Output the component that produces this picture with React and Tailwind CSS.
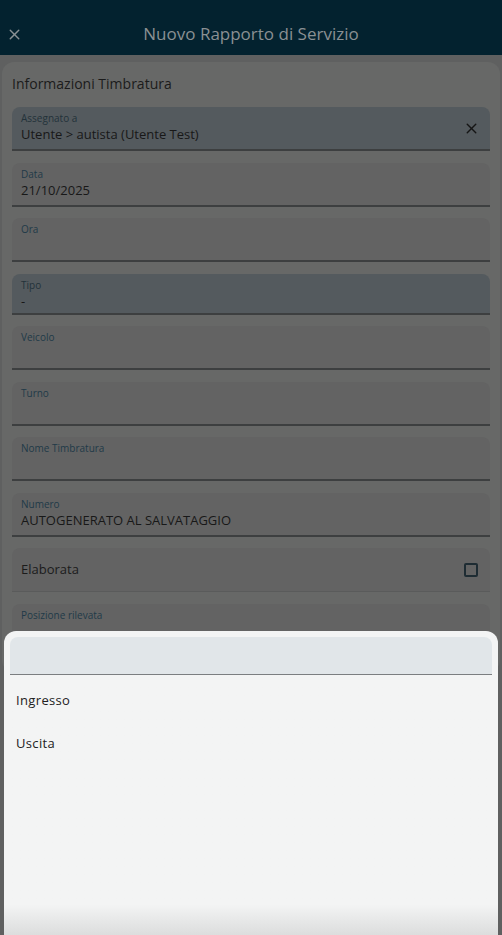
import { X } from 'lucide-react'

const fields = [
  { label: 'Assegnato a', value: 'Utente > autista (Utente Test)', filled: true, clear: true },
  { label: 'Data', value: '21/10/2025' },
  { label: 'Ora', value: '' },
  { label: 'Tipo', value: '-', filled: true, short: true },
  { label: 'Veicolo', value: '' },
  { label: 'Turno', value: '' },
  { label: 'Nome Timbratura', value: '' },
  { label: 'Numero', value: 'AUTOGENERATO AL SALVATAGGIO' },
]

const options = ['Ingresso', 'Uscita']

function Field({ label, value, filled, clear, short }) {
  return (
    <div
      className={`relative flex flex-col rounded-t-lg border-b-2 border-[#3d3f40] px-[9px] pt-[5px] ${
        short ? 'h-[41px]' : 'h-[44px]'
      } ${filled ? 'bg-[#545a5e]' : 'bg-[#636363]'}`}
    >
      <span className={`text-[10px] leading-[13px] ${filled ? 'text-[#23323a]' : 'text-[#1f3a48]'}`}>{label}</span>
      <span className="text-[13px] leading-[19px] text-[#181818]">{value}</span>
      {clear && (
        <X size={17} strokeWidth={2} className="absolute right-[10px] top-[13px] text-[#151515]" />
      )}
    </div>
  )
}

export default function App() {
  return (
    <div className="relative h-[935px] w-full overflow-hidden bg-[#5f6060] font-['Open_Sans',sans-serif]">
      <header className="relative flex h-[55px] items-center justify-center bg-[#03222f] pt-[13px]">
        <X size={17} strokeWidth={2} className="absolute left-[6px] top-[26px] text-[#8a9194]" />
        <h1 className="text-[17px] leading-[24px] text-[#8a9093]">Nuovo Rapporto di Servizio</h1>
      </header>

      <main className="mx-[2px] mt-[7px] rounded-xl bg-[#676867] px-[10px] pt-[10px] pb-6">
        <h2 className="text-[14px] leading-[24px] text-[#1b1b1b]">Informazioni Timbratura</h2>
        <div className="mt-[11px] flex flex-col gap-[11.5px]">
          {fields.map((f) => (
            <Field key={f.label} {...f} />
          ))}
          <div className="flex h-[44px] items-center justify-between rounded-t-lg border-b border-[#5a5b5b] bg-[#636363] px-[9px]">
            <span className="text-[13px] text-[#1b1b1b]">Elaborata</span>
            <span className="mr-[3px] h-[14px] w-[14px] rounded-[2px] border-2 border-[#1e2c33]" />
          </div>
          <div className="flex h-[44px] flex-col rounded-t-lg bg-[#636363] px-[9px] pt-[5px]">
            <span className="text-[10px] leading-[13px] text-[#1f3a48]">Posizione rilevata</span>
          </div>
        </div>
      </main>

      <div className="absolute inset-x-[4px] bottom-0 top-[631px] rounded-t-xl bg-[#f3f4f4] bg-gradient-to-b from-[#f3f4f4] from-90% to-[#dcdddd] px-[6px] pt-[6px]">
        <div className="h-[38px] rounded-t-lg border-b border-[#7b7e80] bg-[#e1e6e9]" />
        <ul className="mt-[4px] flex flex-col">
          {options.map((o) => (
            <li key={o} className="flex h-[43px] items-center px-[6px] text-[13px] tracking-[0.35px] text-[#222]">
              {o}
            </li>
          ))}
        </ul>
      </div>
    </div>
  )
}
